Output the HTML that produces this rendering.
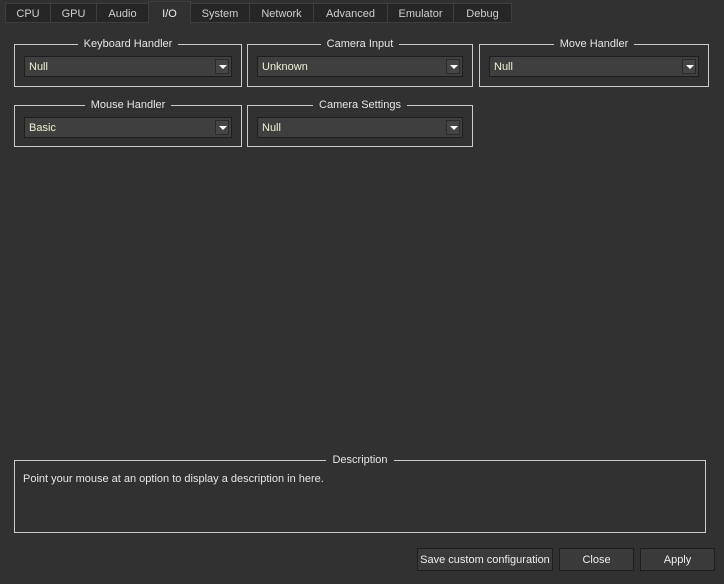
<!DOCTYPE html>
<html><head><style>
body{margin:0;width:724px;height:584px;background:#313131;font-family:"Liberation Sans",sans-serif;font-size:11px;color:#e6e6e6;position:relative;overflow:hidden;white-space:nowrap}
.tab{position:absolute;top:3px;height:20px;background:#262626;border:1px solid #3e3e3e;box-sizing:border-box;text-align:center;line-height:21px;color:#cfcfcf}
.tab.a{top:1px;height:23px;background:#313131;border-bottom:none;color:#eee;line-height:25px}
.g{position:absolute;border:1px solid #c8ccd0;box-sizing:border-box}
.g .t{position:absolute;top:-7px;left:0;right:0;text-align:center}
.g .t span{background:#313131;padding:0 6px}
.cb{position:absolute;left:9px;right:9px;top:19px;height:21px;background:#3f3f3f;border:1px solid #1e1e1e;box-sizing:border-box;padding-left:4px;line-height:21px;color:#f0f0d8}
.cb i{position:absolute;right:2px;top:2px;width:14px;height:15px;background:#454545;border:1px solid #2a2a2a;box-sizing:border-box}
.cb i:after{content:"";position:absolute;left:3px;top:5px;border-left:4px solid transparent;border-right:4px solid transparent;border-top:4px solid #fff}
.btn{position:absolute;top:548px;height:23px;background:#3a3a3a;border:1px solid #1e1e1e;box-sizing:border-box;text-align:center;line-height:23px;color:#eee}
</style></head><body>
<div class="tab" style="left:5px;width:46px">CPU</div>
<div class="tab" style="left:50px;width:47px">GPU</div>
<div class="tab" style="left:96px;width:53px">Audio</div>
<div class="tab a" style="left:148px;width:43px">I/O</div>
<div class="tab" style="left:190px;width:60px">System</div>
<div class="tab" style="left:249px;width:65px">Network</div>
<div class="tab" style="left:313px;width:75px">Advanced</div>
<div class="tab" style="left:387px;width:67px">Emulator</div>
<div class="tab" style="left:453px;width:59px">Debug</div>

<div class="g" style="left:14px;top:44px;width:228px;height:43px"><div class="t"><span>Keyboard Handler</span></div><div class="cb" style="top:11px">Null<i></i></div></div>
<div class="g" style="left:247px;top:44px;width:226px;height:43px"><div class="t"><span>Camera Input</span></div><div class="cb" style="top:11px">Unknown<i></i></div></div>
<div class="g" style="left:479px;top:44px;width:230px;height:43px"><div class="t"><span>Move Handler</span></div><div class="cb" style="top:11px">Null<i></i></div></div>
<div class="g" style="left:14px;top:105px;width:228px;height:42px"><div class="t"><span>Mouse Handler</span></div><div class="cb" style="top:11px">Basic<i></i></div></div>
<div class="g" style="left:247px;top:105px;width:226px;height:42px"><div class="t"><span>Camera Settings</span></div><div class="cb" style="top:11px">Null<i></i></div></div>

<div class="g" style="left:14px;top:460px;width:692px;height:73px"><div class="t"><span>Description</span></div>
<div style="position:absolute;left:8px;top:12px">Point your mouse at an option to display a description in here.</div></div>

<div class="btn" style="left:417px;width:136px">Save custom configuration</div>
<div class="btn" style="left:559px;width:75px">Close</div>
<div class="btn" style="left:640px;width:75px">Apply</div>
</body></html>
